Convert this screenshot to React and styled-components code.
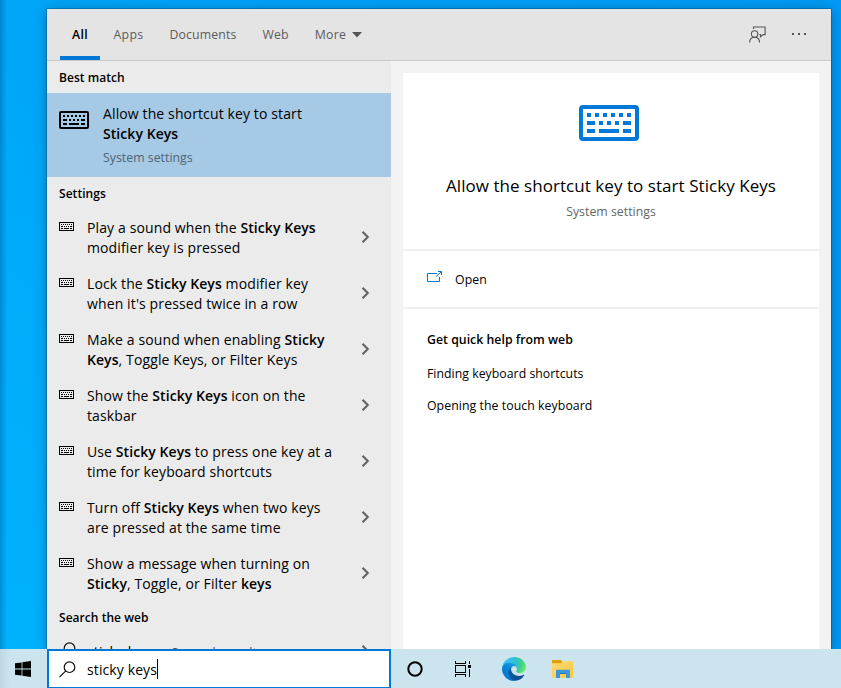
import React from "react";
import styled, { createGlobalStyle, css } from "styled-components";

const Global = createGlobalStyle`
  * { box-sizing: border-box; }
  html, body { margin: 0; height: 100%; overflow: hidden; }
  body { font-family: "Open Sans", "Noto Sans", sans-serif; color: #000; }
  h1, h2, p { margin: 0; font-weight: 400; }
`;

const small = css`
  font-size: 12.3px;
  letter-spacing: 0.02px;
  line-height: 16px;
`;

const Desktop = styled.div`
  display: flex;
  flex-direction: column;
  width: 841px;
  height: 688px;
  overflow: hidden;
  background: linear-gradient(90deg, rgba(0, 60, 110, 0.3) 0, rgba(0, 60, 110, 0) 7px),
    linear-gradient(90deg, rgba(0, 149, 238, 0) 0, #009af4 100%),
    linear-gradient(180deg, #00a6f8 0, #00b4ff 100%);
`;

const Stage = styled.div`
  flex: 1;
  min-height: 0;
  padding: 9px 10px 0 47px;
  overflow: hidden;
`;

const SearchWindow = styled.section`
  display: flex;
  flex-direction: column;
  height: 100%;
  background: #f3f3f3;
  box-shadow: 0 0 0 1px rgba(0, 50, 90, 0.3), 0 2px 12px rgba(0, 30, 60, 0.4);
`;

const Header = styled.header`
  display: flex;
  justify-content: space-between;
  flex: none;
  height: 52px;
  padding-left: 13px;
  padding-right: 25px;
  background: #e4e4e4;
  border-bottom: 1px solid #c8c8c8;
`;

const Tabs = styled.nav`
  display: flex;
`;

const Tab = styled.button`
  ${small}
  display: flex;
  align-items: center;
  justify-content: center;
  gap: 6px;
  width: ${(p) => p.$width}px;
  padding: 5px 0 ${(p) => (p.$active ? 0 : 4)}px;
  border: 0;
  border-bottom: ${(p) => (p.$active ? "4px solid #0078d7" : "0")};
  background: none;
  font-family: inherit;
  font-weight: ${(p) => (p.$active ? 600 : 400)};
  letter-spacing: ${(p) => p.$track || 0.12}px;
  color: ${(p) => (p.$active ? "#000" : "#5c5c5c")};
`;

const HeaderTools = styled.div`
  display: flex;
  align-items: center;
  gap: 26px;
  padding-bottom: 1px;
  color: #555;
`;

const Body = styled.div`
  display: flex;
  flex: 1;
  min-height: 0;
`;

const Results = styled.div`
  width: 344px;
  flex: none;
  overflow: hidden;
  background: #ebebeb;
`;

const GroupTitle = styled.h2`
  ${small}
  display: flex;
  align-items: center;
  height: ${(p) => p.$height || 33}px;
  padding: ${(p) => p.$top || 0}px 0 ${(p) => p.$bottom || 0}px 12px;
  font-size: 12px;
  font-weight: 600;
  letter-spacing: 0.04px;
`;

const BestMatch = styled.div`
  display: flex;
  align-items: flex-start;
  height: 84px;
  padding: 11px 12px 0;
  background: #a6c9e5;

  svg { margin-top: 7px; margin-right: 14px; }
`;

const ResultText = styled.p`
  font-size: 14px;
  line-height: 20px;
  letter-spacing: 0.12px;
  white-space: pre;

  b { font-weight: 600; letter-spacing: 0.06px; }
`;

const Subtitle = styled.p`
  ${small}
  color: ${(p) => p.$color || "#666"};
  padding-top: ${(p) => p.$gap || 0}px;
`;

const ResultRow = styled.div`
  display: flex;
  align-items: flex-start;
  height: 56px;
  padding: 8px 21px 0 12px;

  > svg:first-child { margin-top: 4px; margin-right: 13px; }
`;

const WebRow = styled(ResultRow)`
  padding-top: 7px;

  > svg:first-child { margin: 0 11px 0 0; }

  small { font-size: 12.3px; color: #555; letter-spacing: 0.12px; }
`;

const ChevronSlot = styled.span`
  display: flex;
  margin-left: auto;
  padding-top: ${(p) => p.$top}px;
`;

const Details = styled.main`
  flex: 1;
  margin: 12px 12px 0;
  background: #fff;
`;

const Hero = styled.div`
  display: flex;
  flex-direction: column;
  align-items: center;
  height: 178px;
  padding-top: 32px;
  border-bottom: 2px solid #f0f0f0;
  > svg { margin-right: 4px; }
`;

const HeroTitle = styled.h1`
  margin-top: 33px;
  font-size: 17px;
  line-height: 24px;
  letter-spacing: 0.05px;
`;

const OpenAction = styled.div`
  ${small}
  display: flex;
  align-items: center;
  gap: 13px;
  height: 58px;
  padding-top: 2px;
  padding-left: 24px;
  border-bottom: 2px solid #f0f0f0;
  letter-spacing: 0.12px;
  > svg { margin-bottom: 6px; }
`;

const Help = styled.div`
  display: flex;
  flex-direction: column;
  gap: 16px;
  padding: 23px 24px;
`;

const HelpTitle = styled.h2`
  ${small}
  margin-bottom: 2px;
  font-weight: 600;
`;

const HelpLink = styled.p`
  ${small}
  letter-spacing: ${(p) => p.$track}px;
`;

const Taskbar = styled.footer`
  display: flex;
  flex: none;
  height: 39px;
  background: linear-gradient(90deg, #bdd6e0 0, #cbe4ed 10px, #cbe4ed 100%);
`;

const StartButton = styled.div`
  display: grid;
  place-items: center;
  width: 47px;
  padding: 1px 1px 0 0;
`;

const SearchBox = styled.div`
  display: flex;
  align-items: center;
  width: 344px;
  padding: 0 10px 0 10px;
  border: 2px solid #0078d7;
  border-bottom-width: 1px;
  background: #fff;
  > svg { margin-right: 11px; }
`;

const Query = styled.span`
  font-size: 14px;
  line-height: 20px;
  letter-spacing: 0.11px;
  padding-top: 1px;
`;

const Caret = styled.span`
  width: 1px;
  height: 20px;
  background: #000;
`;

const TaskButton = styled.div`
  display: grid;
  place-items: center;
  width: ${(p) => p.$width}px;
  padding-top: 1px;
`;

function KeyboardIcon({ width, height, color = "#000" }) {
  return (
    <svg width={width} height={height} viewBox="0 0 30 18" fill={color}>
      <rect x="1" y="1" width="28" height="16" rx="1" fill="none" stroke={color} strokeWidth="2" />
      <path d="M4 4h2v2H4zM8 4h2v2H8zM12 4h2v2h-2zM16 4h2v2h-2zM20 4h2v2h-2zM24 4h2v2h-2zM4 8h4v2H4zM10 8h2v2h-2zM14 8h2v2h-2zM18 8h2v2h-2zM22 8h4v2h-4zM4 12h4v2H4zM10 12h10v2H10zM22 12h4v2h-4z" />
    </svg>
  );
}

function SmallKeyboardIcon() {
  return (
    <svg width="15" height="9" viewBox="0 0 15 9" shapeRendering="crispEdges">
      <rect x=".5" y=".5" width="14" height="8" fill="none" stroke="#000" />
      <path d="M2 2h1v1H2zM4 2h1v1H4zM6 2h1v1H6zM8 2h1v1H8zM10 2h1v1h-1zM12 2h1v1h-1zM2 4h2v1H2zM5 4h1v1H5zM7 4h1v1H7zM9 4h1v1H9zM11 4h2v1h-2zM2 6h2v1H2zM5 6h5v1H5zM11 6h2v1h-2z" />
    </svg>
  );
}

function Chevron() {
  return (
    <svg width="9" height="12" viewBox="0 0 9 12" fill="none" stroke="#606060" strokeWidth="2">
      <path d="M1.5 .8 6.8 6 1.5 11.2" />
    </svg>
  );
}

function SearchIcon() {
  return (
    <svg width="17" height="17" viewBox="0 0 17 17" fill="none" stroke="#111" strokeWidth="1.2">
      <circle cx="10.500" cy="6.200" r="5.300" />
      <path d="M6.800 9.900.5 16.200" />
    </svg>
  );
}

function FeedbackIcon() {
  return (
    <svg width="17" height="17" viewBox="0 0 17 17" fill="none" stroke="currentColor" strokeWidth="1.1">
      <path d="M4.500 3V1h11.600v7.600h-2l-2.600 2.300V8.500h-1.300" />
      <circle cx="5.600" cy="8" r="3.200" />
      <path d="M.6 16.600c0-3.300 2.200-5.300 5-5.300s5 2 5 5.300" />
    </svg>
  );
}

function MoreIcon() {
  return (
    <svg width="14" height="2" viewBox="0 0 14 2" fill="currentColor" shapeRendering="crispEdges">
      <path d="M0 0h2v2H0zM6 0h2v2H6zM12 0h2v2h-2z" />
    </svg>
  );
}

function OpenIcon() {
  return (
    <svg width="15" height="12" viewBox="0 0 15 12" fill="none" stroke="#0078d7">
      <path d="M10 2.500H.5v8h12V6" />
      <path d="M9 5.500 14 1M11 .5h3.500V4" />
    </svg>
  );
}

function WindowsIcon() {
  return (
    <svg width="16" height="16" viewBox="0 0 16 16">
      <path d="M0 2.300 6.600 1.400v6.100H0zM7.400 1.200 16 0v7.500H7.400zM0 8.400h6.600v6.200L0 13.700zM7.400 8.400H16V16l-8.600-1.200z" />
    </svg>
  );
}

function TaskViewIcon() {
  return (
    <svg width="16" height="16" viewBox="0 0 16 16" fill="none" stroke="#000" shapeRendering="crispEdges">
      <path d="M.5 0v2.500h10V0M.5 16v-2.500h10V16M.5 4.500h10v7H.5zM14.500 0v3M14.500 8v8" />
      <path d="M13 4h3v3h-3z" fill="#000" stroke="none" />
    </svg>
  );
}

function EdgeIcon() {
  return (
    <svg width="24" height="24" viewBox="0 0 256 256">
      <defs>
        <linearGradient id="edgeBase" x1="63" y1="177" x2="241" y2="177" gradientUnits="userSpaceOnUse">
          <stop offset="0" stopColor="#0c59a4" />
          <stop offset="1" stopColor="#114a8b" />
        </linearGradient>
        <linearGradient id="edgeSide" x1="157" y1="101" x2="46" y2="222" gradientUnits="userSpaceOnUse">
          <stop offset="0" stopColor="#1b9de2" />
          <stop offset=".16" stopColor="#1595df" />
          <stop offset=".67" stopColor="#0680d7" />
          <stop offset="1" stopColor="#0078d4" />
        </linearGradient>
        <radialGradient id="edgeTop" cx="26" cy="47" r="230" gradientUnits="userSpaceOnUse">
          <stop offset="0" stopColor="#35c1f1" />
          <stop offset=".3" stopColor="#34c1ed" />
          <stop offset=".55" stopColor="#2fc2c6" />
          <stop offset=".8" stopColor="#3fd08b" />
          <stop offset="1" stopColor="#66eb6e" />
        </radialGradient>
      </defs>
      <path fill="url(#edgeBase)" d="M231 190.500a93.700 93.700 0 0 1-10.500 4.700 101.900 101.900 0 0 1-35.900 6.400c-47.300 0-88.500-32.500-88.500-74.300a31.500 31.500 0 0 1 16.400-27.300c-42.800 1.800-53.800 46.400-53.800 72.500 0 73.900 68.100 81.400 82.800 81.400 7.900 0 19.800-2.300 27-4.600l1.300-.4a128.300 128.300 0 0 0 66.600-52.800 4 4 0 0 0-5.400-5.600Z" />
      <path fill="url(#edgeSide)" d="M105.700 241.400a79.200 79.200 0 0 1-22.700-21.300 80.700 80.700 0 0 1 29.500-120c3.200-1.500 8.500-4.100 15.600-4a32.400 32.400 0 0 1 25.700 13 31.900 31.900 0 0 1 6.300 18.700c0-.2 24.500-79.600-80-79.600-43.900 0-80 41.700-80 78.200a130.200 130.200 0 0 0 12.100 56 128 128 0 0 0 156.400 67 75.500 75.500 0 0 1-62.800-8Z" />
      <path fill="url(#edgeTop)" d="M152.300 148.900c-.8 1-3.300 2.500-3.300 5.700 0 2.600 1.700 5.100 4.700 7.200 14.400 10 41.500 8.700 41.600 8.700a59.600 59.600 0 0 0 30.300-8.400 61.400 61.400 0 0 0 30.400-52.900c.3-22.400-8-37.300-11.300-43.900C223.500 23.900 177.700 0 128 0A128 128 0 0 0 0 126.200c.5-36.500 36.800-66 80-66 3.500 0 23.500.3 42 10a72.600 72.600 0 0 1 30.900 29.300c6.100 10.600 7.200 24.100 7.200 29.500s-2.700 13.300-7.800 19.900Z" />
    </svg>
  );
}

function FolderIcon() {
  return (
    <svg width="22" height="18" viewBox="0 0 22 18">
      <defs>
        <linearGradient id="folderFace" x1="0" y1="0" x2="1" y2="1">
          <stop offset="0" stopColor="#ffdc76" />
          <stop offset="1" stopColor="#fbc63c" />
        </linearGradient>
      </defs>
      <path fill="#dfa000" d="M0 .8Q0 0 .8 0H9l1.500 2V5H0z" />
      <path fill="url(#folderFace)" d="M0 3.200h9L11 1.200h9q1 0 1 1V17q0 .8-.8.8H0z" />
      <path fill="#3c96dc" d="M4 18v-7q0-1.200 1.200-1.200h11.600q1.200 0 1.200 1.200v7h-4v-4.200H8V18z" />
      <path fill="#1d74bd" d="M8 13h6v1H8z" />
    </svg>
  );
}

const settings = [
  <>Play a sound when the <b>Sticky Keys</b>{"\n"}modifier key is pressed</>,
  <>Lock the <b>Sticky Keys</b> modifier key{"\n"}when it's pressed twice in a row</>,
  <>Make a sound when enabling <b>Sticky{"\n"}Keys</b>, Toggle Keys, or Filter Keys</>,
  <>Show the <b>Sticky Keys</b> icon on the{"\n"}taskbar</>,
  <>Use <b>Sticky Keys</b> to press one key at a{"\n"}time for keyboard shortcuts</>,
  <>Turn off <b>Sticky Keys</b> when two keys{"\n"}are pressed at the same time</>,
  <>Show a message when turning on{"\n"}<b>Sticky</b>, Toggle, or Filter <b>keys</b></>,
];

export default function App() {
  return (
    <Desktop>
      <Global />
      <Stage>
        <SearchWindow>
          <Header>
            <Tabs>
              <Tab $active $width={40} $track={0.4}>All</Tab>
              <Tab $width={57} $track={0.3}>Apps</Tab>
              <Tab $width={92}>Documents</Tab>
              <Tab $width={53}>Web</Tab>
              <Tab $width={73} $track={0.3}>
                More
                <svg width="10" height="6" viewBox="0 0 10 6" fill="#555"><path d="M0 0h10L5 5.500z" /></svg>
              </Tab>
            </Tabs>
            <HeaderTools>
              <FeedbackIcon />
              <MoreIcon />
            </HeaderTools>
          </Header>
          <Body>
            <Results>
              <GroupTitle $height={32} $top={2}>Best match</GroupTitle>
              <BestMatch>
                <KeyboardIcon width={30} height={18} />
                <div>
                  <ResultText>Allow the shortcut key to start{"\n"}<b>Sticky Keys</b></ResultText>
                  <Subtitle $gap={6} $color="#4f6475">System settings</Subtitle>
                </div>
              </BestMatch>
              <GroupTitle>Settings</GroupTitle>
              {settings.map((text, i) => (
                <ResultRow key={i}>
                  <SmallKeyboardIcon />
                  <ResultText>{text}</ResultText>
                  <ChevronSlot $top={13}><Chevron /></ChevronSlot>
                </ResultRow>
              ))}
              <GroupTitle $bottom={2}>Search the web</GroupTitle>
              <WebRow>
                <SearchIcon />
                <ResultText>sticky keys <small> - See web results</small></ResultText>
                <ChevronSlot $top={3}><Chevron /></ChevronSlot>
              </WebRow>
            </Results>
            <Details>
              <Hero>
                <KeyboardIcon width={60} height={36} color="#0078d7" />
                <HeroTitle>Allow the shortcut key to start Sticky Keys</HeroTitle>
                <Subtitle $gap={6}>System settings</Subtitle>
              </Hero>
              <OpenAction><OpenIcon />Open</OpenAction>
              <Help>
                <HelpTitle>Get quick help from web</HelpTitle>
                <HelpLink $track={0.02}>Finding keyboard shortcuts</HelpLink>
                <HelpLink $track={0.06}>Opening the touch keyboard</HelpLink>
              </Help>
            </Details>
          </Body>
        </SearchWindow>
      </Stage>
      <Taskbar>
        <StartButton><WindowsIcon /></StartButton>
        <SearchBox>
          <SearchIcon />
          <Query>sticky keys</Query>
          <Caret />
        </SearchBox>
        <TaskButton $width={48}>
          <svg width="16" height="16" viewBox="0 0 16 16" fill="none" stroke="#000" strokeWidth="2">
            <circle cx="8" cy="8" r="6.700" />
          </svg>
        </TaskButton>
        <TaskButton $width={48}><TaskViewIcon /></TaskButton>
        <TaskButton $width={54}><EdgeIcon /></TaskButton>
        <TaskButton $width={44}><FolderIcon /></TaskButton>
      </Taskbar>
    </Desktop>
  );
}
